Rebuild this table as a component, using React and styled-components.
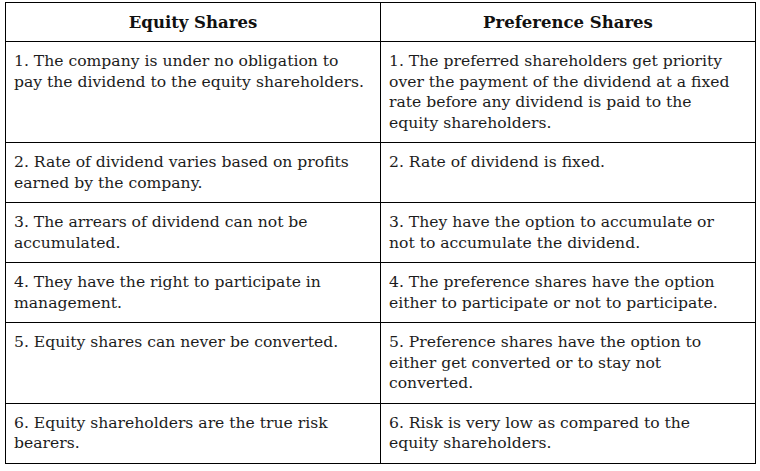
import React from "react";
import styled, { createGlobalStyle } from "styled-components";

const Global = createGlobalStyle`
  html, body { margin: 0; padding: 0; background: #fff; }
  body { font-family: "DejaVu Serif", "Liberation Serif", serif; color: #1c1c1c; }
`;

const Page = styled.div`
  padding: 2px 0 0 5px;
`;

const Table = styled.table`
  border-collapse: collapse;
  table-layout: fixed;
  width: 751px;
`;

const HeadCell = styled.th`
  border: 1px solid #000;
  height: 38px;
  padding: 0 8px;
  font-size: 16.5px;
  font-weight: bold;
  text-align: center;
  vertical-align: middle;
  color: #111;
`;

const Cell = styled.td`
  border: 1px solid #000;
  padding: 9px 6px 9px 8px;
  font-size: 15.6px;
  line-height: 20.5px;
  vertical-align: top;
  text-align: left;
`;

const Line = styled.span`
  display: block;
`;

const rows = [
  [
    ["1. The company is under no obligation to", "pay the dividend to the equity shareholders."],
    [
      "1. The preferred shareholders get priority",
      "over the payment of the dividend at a fixed",
      "rate before any dividend is paid to the",
      "equity shareholders.",
    ],
  ],
  [
    ["2. Rate of dividend varies based on profits", "earned by the company."],
    ["2. Rate of dividend is fixed."],
  ],
  [
    ["3. The arrears of dividend can not be", "accumulated."],
    ["3. They have the option to accumulate or", "not to accumulate the dividend."],
  ],
  [
    ["4. They have the right to participate in", "management."],
    ["4. The preference shares have the option", "either to participate or not to participate."],
  ],
  [
    ["5. Equity shares can never be converted."],
    ["5. Preference shares have the option to", "either get converted or to stay not", "converted."],
  ],
  [
    ["6. Equity shareholders are the true risk", "bearers."],
    ["6. Risk is very low as compared to the", "equity shareholders."],
  ],
];

export default function App() {
  return (
    <>
      <Global />
      <Page>
        <Table>
          <thead>
            <tr>
              <HeadCell>Equity Shares</HeadCell>
              <HeadCell>Preference Shares</HeadCell>
            </tr>
          </thead>
          <tbody>
            {rows.map((r, i) => (
              <tr key={i}>
                {r.map((lines, j) => (
                  <Cell key={j}>
                    {lines.map((t, k) => (
                      <Line key={k}>{t}</Line>
                    ))}
                  </Cell>
                ))}
              </tr>
            ))}
          </tbody>
        </Table>
      </Page>
    </>
  );
}
